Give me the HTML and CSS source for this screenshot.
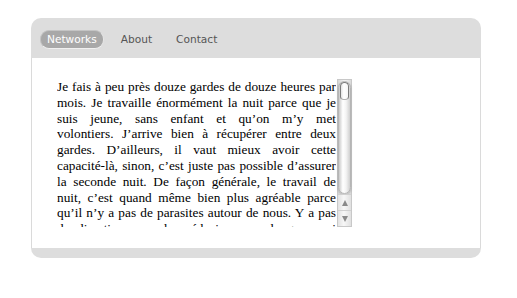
FILE: index.html
```html
<!DOCTYPE html>
<html lang="fr">
<head>
<meta charset="utf-8">
<title>Networks</title>
<link rel="stylesheet" href="styles.css">
</head>
<body>
<div class="panel">
  <nav class="tabs">
    <a class="tab active">Networks</a>
    <a class="tab">About</a>
    <a class="tab">Contact</a>
  </nav>
  <main class="content">
    <div class="scroller">
      <p class="text"><span class="line">Je fais à peu près douze gardes de douze heures par</span> <span class="line">mois. Je travaille énormément la nuit parce que je</span> <span class="line">suis jeune, sans enfant et qu’on m’y met</span> <span class="line">volontiers. J’arrive bien à récupérer entre deux</span> <span class="line">gardes. D’ailleurs, il vaut mieux avoir cette</span> <span class="line">capacité-là, sinon, c’est juste pas possible d’assurer</span> <span class="line">la seconde nuit. De façon générale, le travail de</span> <span class="line">nuit, c’est quand même bien plus agréable parce</span> <span class="line">qu’il n’y a pas de parasites autour de nous. Y a pas</span> <span class="line">de direction, pas de médecins, pas de gens qui viennent</span> <span class="line">tout le temps nous déranger.</span></p>
      <div class="scrollbar">
        <div class="track">
          <div class="thumb"><div class="cap"></div></div>
        </div>
        <div class="btn"><span class="arrow up"></span></div>
        <div class="btn"><span class="arrow down"></span></div>
      </div>
    </div>
  </main>
  <footer class="foot"></footer>
</div>
</body>
</html>
```
FILE: styles.css
```css
html, body {
  margin: 0;
  padding: 0;
  background: #fff;
}
.panel {
  width: 450px;
  margin: 18px 0 0 31px;
  display: flex;
  flex-direction: column;
}
.tabs {
  height: 40px;
  box-sizing: border-box;
  background: #dddddd;
  border-radius: 10px 10px 0 0;
  padding: 13px 0 0 9px;
  display: flex;
  align-items: flex-start;
  gap: 10px;
}
.tab {
  font-family: "DejaVu Sans", sans-serif;
  font-size: 10.6px;
  line-height: 13px;
  color: #555;
  padding: 2px 6px;
  border-radius: 9px;
  border: 1px solid transparent;
  margin-top: -1px;
}
.tab.active {
  background: #a8a8a8;
  color: #fff;
  border-color: #c4c4c4 #e6e6e6 #f0f0f0 #c4c4c4;
}
.content {
  background: #fff;
  border-left: 1px solid #dadada;
  border-right: 1px solid #dadada;
  padding: 21px 0 21px 25px;
}
.scroller {
  display: flex;
  gap: 1px;
  height: 148px;
}
.text {
  margin: 0;
  width: 279px;
  height: 148px;
  overflow: hidden;
  font-family: "Liberation Serif", "Times New Roman", serif;
  font-size: 13.3px;
  line-height: 15.8px;
  color: #000;
}
.line {
  display: block;
  text-align: justify;
  text-align-last: justify;
}
.scrollbar {
  width: 15px;
  flex: none;
  box-sizing: border-box;
  border: 1px solid #c8c8c8;
  display: flex;
  flex-direction: column;
  background: linear-gradient(to right, #d6d6d6, #f2f2f2 45%, #f2f2f2 60%, #d9d9d9);
}
.track {
  flex: 1;
  padding: 1px 0 0 0;
}
.thumb {
  height: 113px;
  border-radius: 7px;
  background: linear-gradient(to right, #c9c9c9, #ffffff 35%, #f3f3f3 65%, #cfcfcf);
  box-shadow: 0 1px 2px rgba(0,0,0,0.25);
  border: 1px solid #b5b5b5;
  box-sizing: border-box;
}
.cap {
  height: 18px;
  margin: 0 1px;
  border-radius: 6px 6px 5px 5px;
  border: 1px solid #7a7a7a;
  border-bottom-color: #b0b0b0;
  background: linear-gradient(to right, #e3e3e3, #ffffff 40%, #f6f6f6);
  box-sizing: border-box;
}
.btn {
  height: 16px;
  border-top: 1px solid #d0d0d0;
  display: flex;
  align-items: center;
  justify-content: center;
  background: linear-gradient(to right, #e2e2e2, #f7f7f7 45%, #f1f1f1 60%, #e0e0e0);
}
.arrow {
  width: 0;
  height: 0;
  border-left: 3px solid transparent;
  border-right: 3px solid transparent;
}
.arrow.up {
  border-bottom: 6px solid #8a8a8a;
}
.arrow.down {
  border-top: 6px solid #8a8a8a;
}
.foot {
  height: 10px;
  background: #dddddd;
  border-radius: 0 0 10px 10px;
}
```
